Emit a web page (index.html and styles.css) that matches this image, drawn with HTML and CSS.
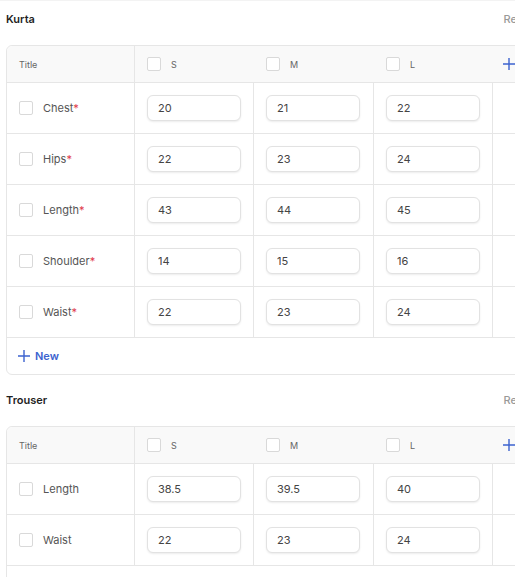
FILE: index.html
```html
<!DOCTYPE html>
<html lang="en">
<head>
  <meta charset="UTF-8">
  <meta name="viewport" content="width=device-width, initial-scale=1.0">
  <title>Size Chart</title>
  <link rel="stylesheet" href="styles.css">
</head>
<body>

<div class="page">

  <div class="section">
    <div class="section-head">
      <span class="section-title">Kurta</span>
      <span class="reset">Reset</span>
    </div>
    <div class="chart">
      <div class="row head">
        <div class="cell title-cell">Title</div>
        <div class="cell"><span class="box"></span>S</div>
        <div class="cell"><span class="box"></span>M</div>
        <div class="cell"><span class="box"></span>L</div>
        <div class="cell add-col">
          <svg width="12" height="12" viewBox="0 0 12 12"><path d="M6 0v12M0 6h12" stroke="#3d63cf" stroke-width="1.4"/></svg>
        </div>
      </div>
      <div class="row">
        <div class="cell name"><span class="box"></span>Chest<span class="req">*</span></div>
        <div class="cell"><input class="val" value="20"></div>
        <div class="cell"><input class="val" value="21"></div>
        <div class="cell"><input class="val" value="22"></div>
        <div class="cell"></div>
      </div>
      <div class="row">
        <div class="cell name"><span class="box"></span>Hips<span class="req">*</span></div>
        <div class="cell"><input class="val" value="22"></div>
        <div class="cell"><input class="val" value="23"></div>
        <div class="cell"><input class="val" value="24"></div>
        <div class="cell"></div>
      </div>
      <div class="row">
        <div class="cell name"><span class="box"></span>Length<span class="req">*</span></div>
        <div class="cell"><input class="val" value="43"></div>
        <div class="cell"><input class="val" value="44"></div>
        <div class="cell"><input class="val" value="45"></div>
        <div class="cell"></div>
      </div>
      <div class="row">
        <div class="cell name"><span class="box"></span>Shoulder<span class="req">*</span></div>
        <div class="cell"><input class="val" value="14"></div>
        <div class="cell"><input class="val" value="15"></div>
        <div class="cell"><input class="val" value="16"></div>
        <div class="cell"></div>
      </div>
      <div class="row">
        <div class="cell name"><span class="box"></span>Waist<span class="req">*</span></div>
        <div class="cell"><input class="val" value="22"></div>
        <div class="cell"><input class="val" value="23"></div>
        <div class="cell"><input class="val" value="24"></div>
        <div class="cell"></div>
      </div>
      <div class="new-row">
        <svg width="12" height="12" viewBox="0 0 12 12"><path d="M6 0v12M0 6h12" stroke="#3d63cf" stroke-width="1.4"/></svg>
        New
      </div>
    </div>
  </div>

  <div class="section">
    <div class="section-head">
      <span class="section-title">Trouser</span>
      <span class="reset">Reset</span>
    </div>
    <div class="chart">
      <div class="row head">
        <div class="cell title-cell">Title</div>
        <div class="cell"><span class="box"></span>S</div>
        <div class="cell"><span class="box"></span>M</div>
        <div class="cell"><span class="box"></span>L</div>
        <div class="cell add-col">
          <svg width="12" height="12" viewBox="0 0 12 12"><path d="M6 0v12M0 6h12" stroke="#3d63cf" stroke-width="1.4"/></svg>
        </div>
      </div>
      <div class="row">
        <div class="cell name"><span class="box"></span>Length</div>
        <div class="cell"><input class="val" value="38.5"></div>
        <div class="cell"><input class="val" value="39.5"></div>
        <div class="cell"><input class="val" value="40"></div>
        <div class="cell"></div>
      </div>
      <div class="row">
        <div class="cell name"><span class="box"></span>Waist</div>
        <div class="cell"><input class="val" value="22"></div>
        <div class="cell"><input class="val" value="23"></div>
        <div class="cell"><input class="val" value="24"></div>
        <div class="cell"></div>
      </div>
      <div class="new-row">
        <svg width="12" height="12" viewBox="0 0 12 12"><path d="M6 0v12M0 6h12" stroke="#3d63cf" stroke-width="1.4"/></svg>
        New
      </div>
    </div>
  </div>

</div>

</body>
</html>
```

FILE: styles.css
```css
html, body {
  margin: 0;
  background: #fff;
  overflow: hidden;
}

body {
  font-family: Inter, "Noto Sans", sans-serif;
  font-size: 11px;
  color: #333;
  border-top: 1px solid #f3f3f3;
}

.page {
  width: 527px;
  padding-left: 6px;
}

.section-head {
  display: flex;
  justify-content: space-between;
  align-items: center;
  height: 36px;
  margin-bottom: 8px;
}

.section-title {
  font-weight: 600;
  color: #1f1f1f;
}

.reset {
  color: #999;
  font-weight: 500;
}

.chart {
  border: 1px solid #e6e6e6;
  border-radius: 6px;
  margin-bottom: 7px;
}

.row {
  display: grid;
  grid-template-columns: 128px 119px 120px 119px 1fr;
  box-sizing: border-box;
  height: 51px;
  border-bottom: 1px solid #e6e6e6;
}

.cell {
  display: flex;
  align-items: center;
  padding-left: 12px;
  border-right: 1px solid #e6e6e6;
}

.cell:last-child {
  border-right: none;
}

.row.head {
  height: 37px;
  background: #f9f9f9;
  border-radius: 6px 6px 0 0;
  font-size: 9px;
  color: #666;
}

.row.head .cell {
  border-right: none;
}

.row.head .title-cell {
  border-right: 1px solid #e6e6e6;
}

.add-col {
  padding-left: 10px;
}

.box {
  width: 14px;
  height: 14px;
  box-sizing: border-box;
  border: 1px solid #d9d9d9;
  border-radius: 2px;
  background: #fff;
  margin-right: 10px;
}

.name {
  color: #555;
}

.req {
  color: #e0384a;
}

.val {
  width: 94px;
  height: 26px;
  box-sizing: border-box;
  border: 1px solid #e2e2e2;
  border-radius: 6px;
  box-shadow: 0 1px 2px rgba(0, 0, 0, 0.08);
  padding: 0 10px;
  font-family: inherit;
  font-size: 11px;
  color: #444;
  background: #fff;
}

.new-row {
  display: flex;
  align-items: center;
  gap: 5px;
  height: 36px;
  padding-left: 11px;
  color: #3d63cf;
  font-weight: 600;
}
```
